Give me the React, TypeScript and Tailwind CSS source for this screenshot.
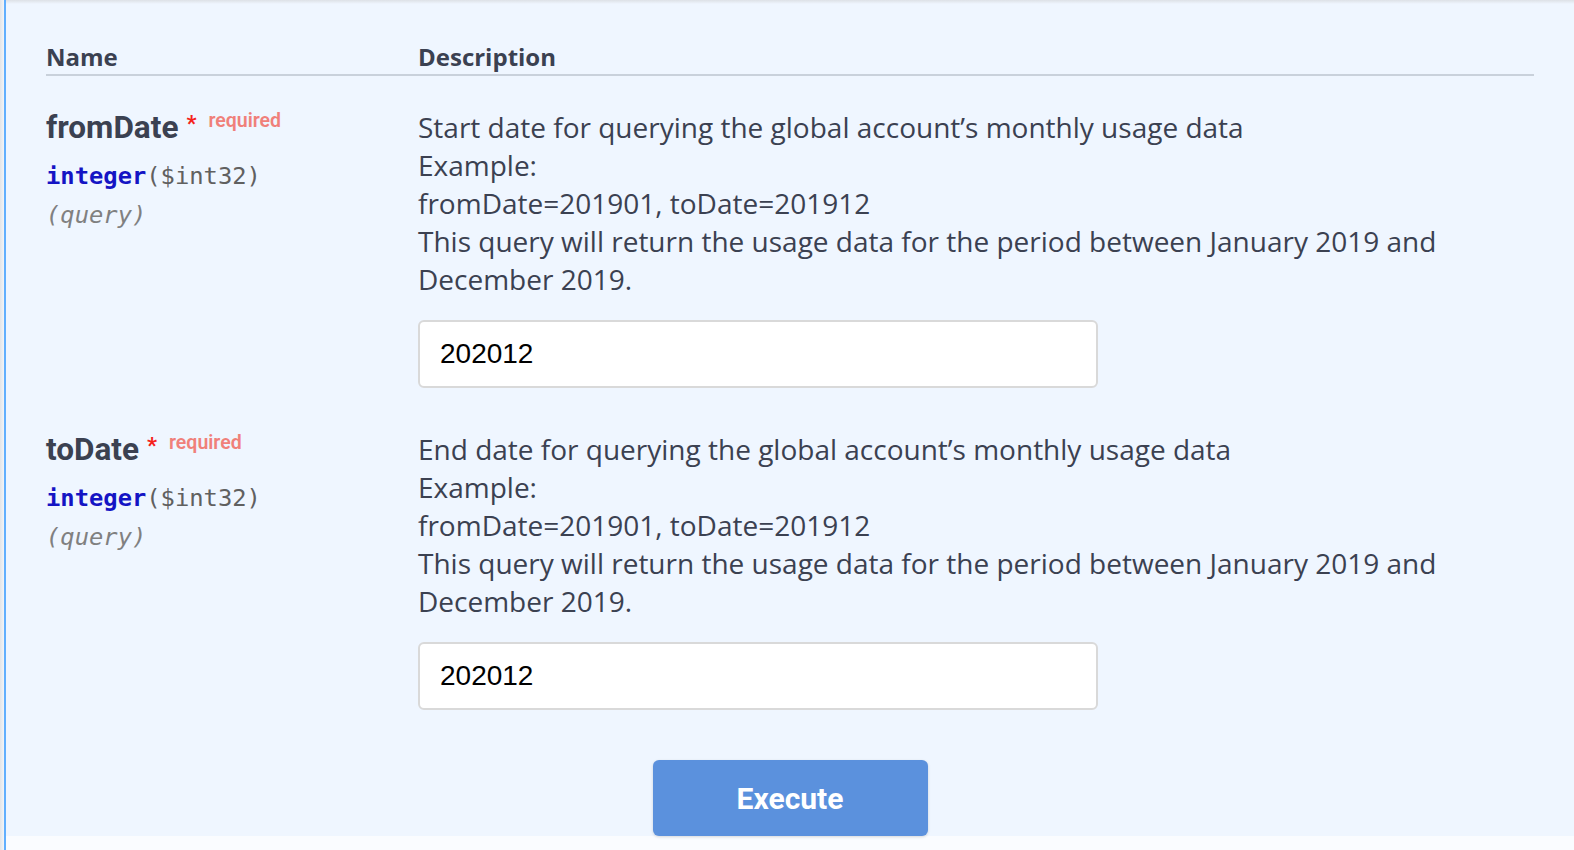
const params = [
  {
    name: "fromDate",
    description: "Start date for querying the global account\u2019s monthly usage data",
    value: "202012",
  },
  {
    name: "toDate",
    description: "End date for querying the global account\u2019s monthly usage data",
    value: "202012",
  },
];

const ParamRow = ({ p }: { p: (typeof params)[number] }) => (
  <div className="flex pt-[33px] pb-[10px]">
    <div className="w-[372px] shrink-0">
      <div className="flex items-start">
        <span className="font-['Roboto',sans-serif] text-[31.5px] font-bold leading-[38px] text-[#3b4151]">
          {p.name}
        </span>
        <span className="ml-[8px] mt-[4px] font-['Roboto',sans-serif] text-[22px] font-bold leading-[22px] text-[#f5221b]">
          *
        </span>
        <span className="ml-[12px] mt-[1px] font-['Roboto',sans-serif] text-[19.5px] font-semibold leading-[22px] text-[#f0807a]">
          required
        </span>
      </div>
      <div className="mt-[10px] font-['DejaVu_Sans_Mono',monospace] text-[23.8px] leading-[38px]">
        <span className="font-semibold text-[#1414c4]">integer</span>
        <span className="text-[#606060]">($int32)</span>
      </div>
      <div className="mt-[1px] font-['DejaVu_Sans_Mono',monospace] text-[23.8px] italic leading-[38px] text-[#808080]">
        (query)
      </div>
    </div>
    <div className="-mt-[1px] flex-1 font-['Open_Sans',sans-serif] text-[28px] leading-[38px] text-[#3b4151]">
      <p>{p.description}</p>
      <p>Example:</p>
      <p>fromDate=201901, toDate=201912</p>
      <p>This query will return the usage data for the period between January 2019 and</p>
      <p>December 2019.</p>
      <div className="mt-[22px] flex h-[68px] w-[680px] items-center rounded-[6px] border-2 border-[#d9d9d9] bg-white pl-[20px] font-['Liberation_Sans',sans-serif] text-[28px] text-black">
        {p.value}
      </div>
    </div>
  </div>
);

export default function App() {
  return (
    <div className="flex h-[850px] w-[1574px] overflow-hidden bg-[#fafcff]">
      <div className="w-[4px] shrink-0 bg-gradient-to-r from-[#e2e4e7] to-[#f3f5f8]" />
      <div className="flex-1 border-l-2 border-[#61affe]">
        <div className="bg-[#eff6ff]">
          <div className="h-[4px] bg-gradient-to-b from-[#dde1e6] to-[#eff6ff]" />
          <div className="pl-[40px] pr-[40px]">
            <div className="flex border-b-2 border-[#c9d1db] pt-[38px] pb-[2px] font-['Open_Sans',sans-serif] text-[24px] font-bold leading-[30px] text-[#3b4151]">
              <div className="w-[372px] shrink-0">Name</div>
              <div>Description</div>
            </div>
            {params.map((p) => (
              <ParamRow key={p.name} p={p} />
            ))}
          </div>
          <div className="flex justify-center pt-[40px]">
            <button className="h-[76px] w-[275px] rounded-[6px] bg-[#5b91dd] font-['Roboto',sans-serif] text-[30px] font-bold text-white shadow-[0_1px_3px_rgba(0,0,0,0.15)]">
              Execute
            </button>
          </div>
        </div>
      </div>
    </div>
  );
}
